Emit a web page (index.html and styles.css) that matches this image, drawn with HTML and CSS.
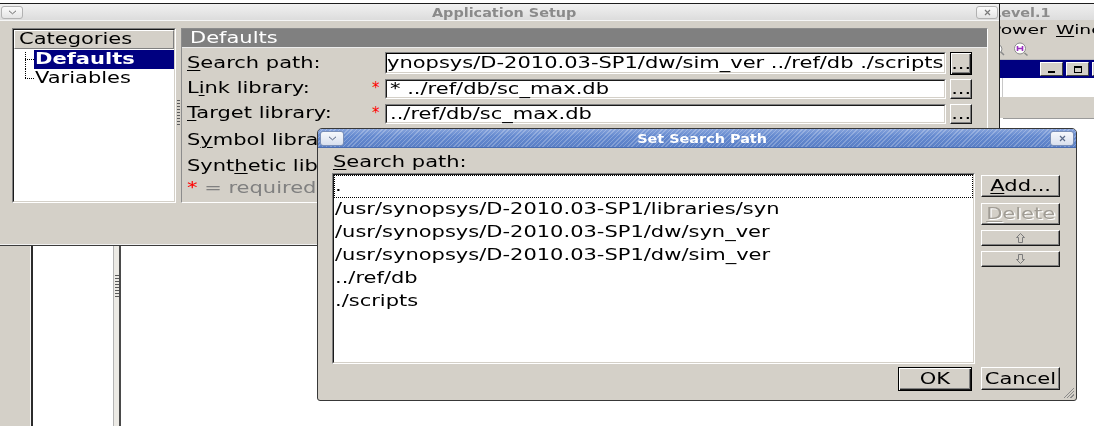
FILE: index.html
```html
<!DOCTYPE html>
<html lang="en">
<head>
<meta charset="utf-8">
<title>Application Setup</title>
<link rel="stylesheet" href="styles.css">
</head>
<body>
<div class="backdrop">
  <div class="bd-left"></div>
  <div class="bd-tree"></div>
  <div class="bd-split"><span class="grip bd-grip"></span></div>
  <div class="bd-main"></div>
</div>

<div class="back">
  <div class="bw-title"><span class="sx tt">Level.1</span></div>
  <div class="bw-menu"><span class="sx m">Power</span><span class="sx m win"><u>W</u>indow</span></div>
  <div class="bw-tools">
    <svg width="44" height="19" viewBox="0 0 44 19">
      <circle cx="8" cy="8" r="4" fill="#fff" stroke="#8a8a8a"/>
      <path d="M11 11l3 3" stroke="#8a8a8a" stroke-width="1.5"/>
      <circle cx="30" cy="7.5" r="5.5" fill="#fff" stroke="#8a8a8a"/>
      <path d="M27.5 5v5M32.5 5v5M27.5 7.5h5" stroke="#9b30c0" stroke-width="1.6"/>
      <path d="M34.5 12l3 2.5" stroke="#8a8a8a" stroke-width="1.5"/>
    </svg>
  </div>
  <div class="bw-mdi">
    <span class="mbtn"><i class="ic-min"></i></span>
    <span class="mbtn"><i class="ic-max"></i></span>
    <span class="mbtn"></span>
  </div>
  <div class="bw-white"></div>
  <div class="bw-gray"></div>
  <div class="bw-rest"></div>
</div>

<div class="app">
  <div class="titlebar">
    <span class="tbtn tmenu"><svg width="9" height="5" viewBox="0 0 9 5"><path d="M1 .8l3.5 3 3.5-3" fill="none" stroke="#6a6a6a"/></svg></span>
    <span class="ttl"><span class="sx c tt">Application Setup</span></span>
    <span class="tbtn tclose"><svg width="7" height="7" viewBox="0 0 7 7"><path d="M1 1l5 5M6 1l-5 5" stroke="#7a7a7a" stroke-width="1.2"/></svg></span>
  </div>
  <div class="app-body">
    <div class="cats sunk">
      <div class="sunk-in cats-in">
        <div class="cats-head"><span class="sx">Categories</span></div>
        <div class="tree">
          <div class="node first"><span class="branch"><i class="up"></i><i class="down"></i></span><span class="lbl sel"><span class="sx">Defaults</span></span></div>
          <div class="node last"><span class="branch"><i class="up"></i><i class="down"></i></span><span class="lbl"><span class="sx">Variables</span></span></div>
        </div>
      </div>
    </div>
    <div class="vsplit"><span class="grip"></span></div>
    <div class="defs">
      <div class="defs-head"><span class="sx">Defaults</span></div>
      <div class="form">
        <div class="row r1">
          <span class="lab"><span class="sx"><u>S</u>earch path:</span></span>
          <span class="star"></span>
          <span class="field sunk tall"><span class="sunk-in fin scrolled"><span class="sx">ynopsys/D-2010.03-SP1/dw/sim_ver ../ref/db ./scripts</span></span></span>
          <span class="btn def dots"><span class="sx c">...</span></span>
        </div>
        <div class="row r2">
          <span class="lab"><span class="sx">L<u>i</u>nk library:</span></span>
          <span class="star">*</span>
          <span class="field sunk"><span class="sunk-in fin"><span class="sx">* ../ref/db/sc_max.db</span></span></span>
          <span class="btn dots"><span class="sx c">...</span></span>
        </div>
        <div class="row r3">
          <span class="lab"><span class="sx"><u>T</u>arget library:</span></span>
          <span class="star">*</span>
          <span class="field sunk"><span class="sunk-in fin"><span class="sx">../ref/db/sc_max.db</span></span></span>
          <span class="btn dots"><span class="sx c">...</span></span>
        </div>
        <div class="row r4">
          <span class="lab"><span class="sx">S<u>y</u>mbol library:</span></span>
          <span class="star"></span>
          <span class="field sunk"><span class="sunk-in fin"></span></span>
          <span class="btn dots"><span class="sx c">...</span></span>
        </div>
        <div class="row r5">
          <span class="lab"><span class="sx">Synt<u>h</u>etic library:</span></span>
          <span class="star"></span>
          <span class="field sunk"><span class="sunk-in fin"></span></span>
          <span class="btn dots"><span class="sx c">...</span></span>
        </div>
        <div class="row r6">
          <span class="req"><span class="sx"><b>*</b> = required</span></span>
        </div>
      </div>
    </div>
  </div>
</div>

<div class="dlg">
  <div class="dtitle">
    <span class="dtb dmenu"><svg width="9" height="5" viewBox="0 0 9 5"><path d="M1 .8l3.5 3 3.5-3" fill="none" stroke="#4f5f80"/></svg></span>
    <span class="ttl"><span class="sx c tt">Set Search Path</span></span>
    <span class="dtb dclose"><svg width="7" height="7" viewBox="0 0 7 7"><path d="M1 1l5 5M6 1l-5 5" stroke="#5a6a8a" stroke-width="1.2"/></svg></span>
  </div>
  <div class="dbody">
    <div class="dlab"><span class="sx"><u>S</u>earch path:</span></div>
    <div class="dmain">
      <div class="list sunk">
        <div class="sunk-in lin">
          <div class="it focus"><span class="sx">.</span></div>
          <div class="it"><span class="sx">/usr/synopsys/D-2010.03-SP1/libraries/syn</span></div>
          <div class="it"><span class="sx">/usr/synopsys/D-2010.03-SP1/dw/syn_ver</span></div>
          <div class="it"><span class="sx">/usr/synopsys/D-2010.03-SP1/dw/sim_ver</span></div>
          <div class="it"><span class="sx">../ref/db</span></div>
          <div class="it"><span class="sx">./scripts</span></div>
        </div>
      </div>
      <div class="col">
        <span class="btn b22"><span class="sx c"><u>A</u>dd...</span></span>
        <span class="btn b22 dis"><span class="sx c"><u>D</u>elete</span></span>
        <span class="btn b16"><svg width="9" height="10" viewBox="0 0 9 10"><path d="M4.5 .5 8.5 4.5H6.5V9.5H2.5V4.5H.5Z" fill="none" stroke="#7c7c7c"/></svg></span>
        <span class="btn b16"><svg width="9" height="10" viewBox="0 0 9 10"><path d="M4.5 9.5 8.5 5.5H6.5V.5H2.5V5.5H.5Z" fill="none" stroke="#7c7c7c"/></svg></span>
      </div>
    </div>
    <div class="dbottom">
      <span class="btn def ok"><span class="sx c">OK</span></span>
      <span class="btn cancel"><span class="sx c">Cancel</span></span>
    </div>
  </div>
  <span class="rs"></span>
</div>
</body>
</html>
```

FILE: styles.css
```css
* { box-sizing: border-box; margin: 0; padding: 0; }
html, body { width: 1094px; height: 426px; overflow: hidden; background: #fff; }
body { position: relative; font-family: "DejaVu Sans", "Noto Sans", sans-serif; font-size: 15px; color: #000; }
i { display: block; }
u { text-decoration: underline; text-decoration-thickness: 1px; text-underline-offset: 2px; }

.sx { display: inline-block; white-space: pre; transform: scaleX(1.4); transform-origin: 0 50%; flex-shrink: 0; }
.sx.c { transform-origin: 50% 50%; }
.tt { font-size: 12px; font-weight: bold; transform: scaleX(1.2); }

/* background main window content */
.backdrop { position: absolute; left: 0; top: 200px; width: 1094px; height: 226px; display: flex; }
.bd-left { width: 31px; background: #d4d0c8; border-right: 1px solid #f4f4f4; }
.bd-tree { width: 82px; background: #fff; border-left: 2px solid #2b2b2b; }
.bd-split { width: 8px; background: #eceae5; border-left: 1px solid #b4b4b4; border-right: 2px solid #4a4a4a; padding: 75px 0 0 1px; }
.grip { display: block; width: 3px; height: 27px; background: repeating-linear-gradient(#5a5a5a 0 1px, transparent 1px 3px); }
.bd-grip { width: 4px; height: 24px; }
.bd-main { flex: 1; background: #fff; }

/* window behind, right side */
.back { position: absolute; left: 990px; top: 3px; width: 104px; height: 423px; border-top: 1px solid #1e1e1e; background: #fff; overflow: hidden; display: flex; flex-direction: column; }
.bw-title { height: 16px; flex-shrink: 0; background: linear-gradient(#efefef, #dddddd); color: #8c8c8c; padding-left: 0; line-height: 16px; white-space: nowrap; }
.bw-title .tt { margin-left: 2px; }
.bw-menu { height: 20px; flex-shrink: 0; background: #d4d0c8; display: flex; font-size: 12.5px; line-height: 20px; white-space: nowrap; }
.bw-menu .m { transform: scaleX(1.5); }
.bw-menu .win { margin-left: 28px; }
.bw-tools { height: 20px; flex-shrink: 0; background: #d4d0c8; border-bottom: 1px solid #b8b8b8; padding-top: 1px; }
.bw-tools svg { display: block; }
.bw-mdi { height: 18px; flex-shrink: 0; background: #000080; display: flex; align-items: center; gap: 3px; padding-left: 50px; }
.mbtn { width: 23px; height: 14px; flex-shrink: 0; background: #d4d0c8; border: 1px solid; border-color: #fff #404040 #404040 #fff; display: flex; align-items: center; justify-content: center; }
.ic-min { width: 7px; height: 2px; background: #000; margin-top: 6px; }
.ic-max { width: 8px; height: 7px; border: 1px solid #000; border-top-width: 2px; }
.bw-white { height: 19px; flex-shrink: 0; background: #fff; border-left: 1px solid #c8c8c8; margin-left: 12px; }
.bw-gray { height: 21px; flex-shrink: 0; background: #d4d0c8; }
.bw-rest { flex: 1; background: #fff; border-top: 1px solid #9a9a9a; margin-left: 13px; }

/* Application Setup window */
.app { position: absolute; left: 0; top: 3px; width: 1000px; height: 243px; background: #d4d0c8; border-top: 1px solid #1e1e1e; border-right: 1px solid #1e1e1e; border-bottom: 1px solid #3c3c3c; display: flex; flex-direction: column; }
.titlebar { height: 17px; flex-shrink: 0; display: flex; align-items: center; background: linear-gradient(#f1f1f1, #dcdcdc); border-bottom: 1px solid #f6f6f6; }
.tbtn { height: 13px; width: 22px; flex-shrink: 0; border: 1px solid #b2b2b2; border-radius: 3px; background: linear-gradient(#fbfbfb, #e4e4e4); display: flex; align-items: center; justify-content: center; }
.tmenu { margin-left: 1px; }
.tclose { margin-right: 1px; }
.ttl { flex: 1; text-align: center; padding-left: 10px; color: #8a8a8a; line-height: 16px; white-space: nowrap; }
.app-body { flex: 1; display: flex; align-items: flex-start; padding: 7px 0 0 12px; border-bottom: 1px solid #f2f2f2; }

.sunk { border: 1px solid; border-color: #808080 #fff #fff #808080; }
.sunk-in { height: 100%; border: 1px solid; border-color: #1a1a1a #d4d0c8 #d4d0c8 #1a1a1a; background: #fff; overflow: hidden; }

.cats { width: 164px; height: 175px; flex-shrink: 0; }
.cats-in { display: flex; flex-direction: column; }
.cats-head { height: 19px; flex-shrink: 0; background: #d4d0c8; border: 1px solid; border-color: #fff #808080 #808080 #fff; padding-left: 4px; line-height: 17px; }
.tree { padding-top: 1px; }
.node { height: 19px; display: flex; }
.branch { width: 20px; flex-shrink: 0; padding-left: 11px; display: flex; flex-direction: column; }
.branch .up { height: 9px; width: 9px; flex-shrink: 0; }
.branch .down { flex: 1; width: 9px; border-top: 1px dotted #000; }
.first .up { margin-top: 2px; height: 7px; border-left: 1px dotted #000; }
.first .down { border-left: 1px dotted #000; }
.last .up { border-left: 1px dotted #000; }
.lbl { flex: 1; line-height: 19px; padding-left: 1px; white-space: nowrap; }
.lbl.sel { background: #000080; color: #fff; font-weight: bold; }

.vsplit { width: 5px; height: 175px; flex-shrink: 0; padding: 72px 0 0 1px; }

.defs { width: 807px; height: 175px; flex-shrink: 0; border: 1px solid; border-color: #8c8c8c #fff #fff #8c8c8c; display: flex; flex-direction: column; overflow: hidden; }
.defs-head { height: 19px; flex-shrink: 0; background: #808080; border-bottom: 1px solid #ececec; color: #fff; padding-left: 8px; line-height: 18px; }
.form { padding: 4px 0 0 5px; }
.row { display: flex; align-items: flex-start; height: 25px; }
.r3 { height: 27px; }
.r4 { height: 26px; }
.r5 { height: 22px; }
.lab { width: 185px; flex-shrink: 0; line-height: 22px; white-space: nowrap; }
.star { width: 13px; flex-shrink: 0; color: #ff0000; line-height: 22px; }
.field { width: 561px; height: 20px; margin-top: 2px; flex-shrink: 0; }
.field.tall { height: 22px; margin-top: 0; }
.fin { display: flex; line-height: 16px; padding-left: 3px; white-space: nowrap; overflow-x: clip; overflow-y: visible; }
.tall .fin { line-height: 18px; }
.fin.scrolled { padding-left: 0; border-top-color: #000; border-left-color: #000; }

.btn { flex-shrink: 0; background: #d4d0c8; border: 1px solid; border-color: #fff #1a1a1a #1a1a1a #fff; box-shadow: inset -1px -1px #808080; display: flex; align-items: center; justify-content: center; white-space: nowrap; }
.btn.def { border-color: #000; box-shadow: inset 1px 1px #fff, inset -1px -1px #1a1a1a, inset -2px -2px #808080; }
.dots { width: 22px; height: 20px; margin: 2px 0 0 4px; }
.r1 .dots { height: 23px; margin-top: 0; }
.req { color: #808080; line-height: 22px; white-space: nowrap; }
.req b { color: #ff0000; font-weight: normal; }

/* Set Search Path dialog */
.dlg { position: absolute; left: 317px; top: 128px; width: 760px; height: 273px; background: #d4d0c8; border: 1px solid #383838; border-radius: 5px 5px 3px 3px; overflow: hidden; display: flex; flex-direction: column; }
.dtitle { height: 19px; flex-shrink: 0; display: flex; align-items: center; border-bottom: 1px solid #4a6db0; background: repeating-linear-gradient(135deg, rgba(255,255,255,.24) 0 1px, transparent 1px 3px), linear-gradient(#86a3db, #6489cf 40%, #5a7fc6); }
.dtb { width: 24px; height: 15px; flex-shrink: 0; border: 1px solid #7a8fb8; border-radius: 3px; background: linear-gradient(#f6f8fc, #d9e0ee); display: flex; align-items: center; justify-content: center; }
.dmenu { margin-left: 2px; }
.dclose { margin-right: 2px; }
.dtitle .ttl { color: #fff; }
.dbody { flex: 1; display: flex; flex-direction: column; padding: 3px 16px 0 14px; }
.dlab { height: 22px; line-height: 22px; padding-left: 1px; white-space: nowrap; }
.dmain { display: flex; gap: 6px; }
.list { flex: 1; height: 191px; }
.it { height: 23px; line-height: 23px; padding-left: 1px; white-space: nowrap; }
.it.focus { border: 1px dotted #000; line-height: 21px; padding-left: 0; }
.col { width: 79px; flex-shrink: 0; display: flex; flex-direction: column; padding-top: 2px; }
.b22 { height: 22px; }
.b16 { height: 16px; margin-top: 5px; }
.dis { margin-top: 6px; color: #a19d95; text-shadow: 1px 1px 0 #fff; }
.dbottom { display: flex; justify-content: flex-end; gap: 9px; margin-top: 3px; }
.ok { width: 74px; height: 24px; }
.cancel { width: 79px; height: 23px; }
.rs { position: absolute; right: 2px; bottom: 2px; width: 10px; height: 10px; background: linear-gradient(135deg, transparent 0 46%, #8a8a8a 46% 53%, transparent 53% 63%, #8a8a8a 63% 70%, transparent 70% 80%, #8a8a8a 80% 87%, transparent 87%); }
```
